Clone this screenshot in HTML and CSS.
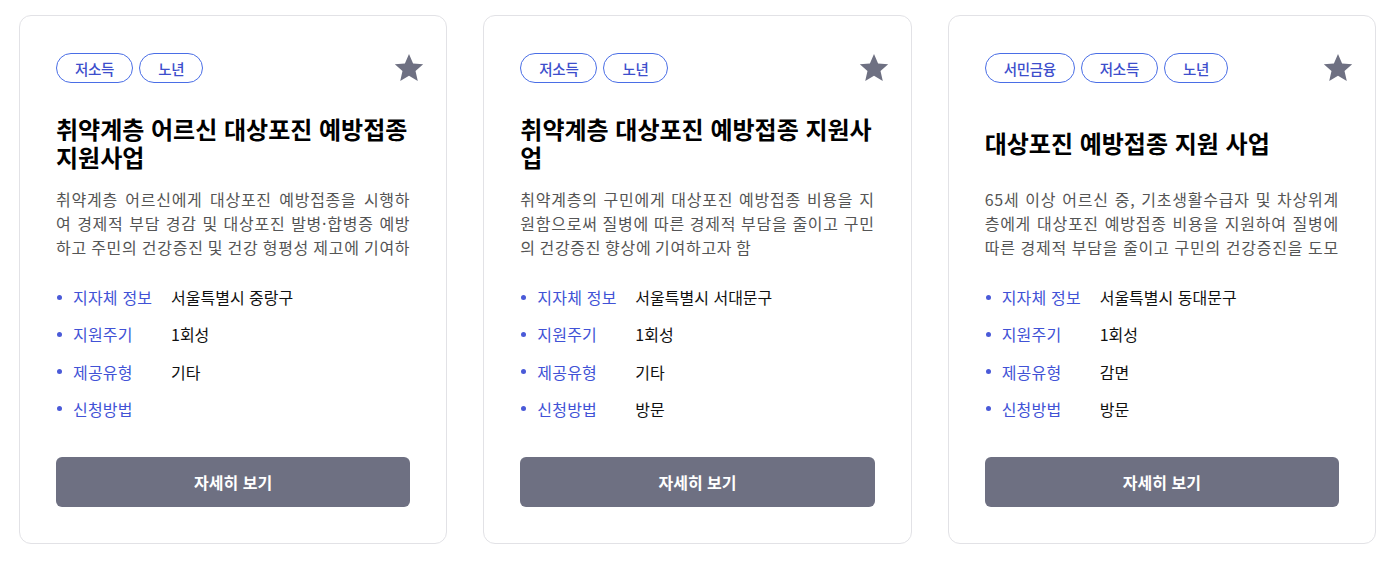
FILE: index.html
```html
<!DOCTYPE html>
<html lang="ko">
<head>
<meta charset="utf-8">
<link rel="stylesheet" href="styles.css">
</head>
<body>
<div class="cards">
  <div class="card">
    <div class="card-head">
      <div class="tags"><span class="tag">저소득</span><span class="tag">노년</span></div>
      <svg class="star" viewBox="0 0 24 24"><path d="M12 2.2l2.9 6.6 7.1.6-5.4 4.7 1.6 7-6.2-3.7-6.2 3.7 1.6-7L2 9.4l7.1-.6z"/></svg>
    </div>
    <div class="title-box"><h2 class="title">취약계층 어르신 대상포진 예방접종 지원사업</h2></div>
    <p class="desc">취약계층 어르신에게 대상포진 예방접종을 시행하여 경제적 부담 경감 및 대상포진 발병·합병증 예방하고 주민의 건강증진 및 건강 형평성 제고에 기여하고자 함</p>
    <ul class="info">
      <li><span class="label">지자체 정보</span><span class="value">서울특별시 중랑구</span></li>
      <li><span class="label">지원주기</span><span class="value">1회성</span></li>
      <li><span class="label">제공유형</span><span class="value">기타</span></li>
      <li><span class="label">신청방법</span><span class="value"></span></li>
    </ul>
    <button class="btn">자세히 보기</button>
  </div>
  <div class="card">
    <div class="card-head">
      <div class="tags"><span class="tag">저소득</span><span class="tag">노년</span></div>
      <svg class="star" viewBox="0 0 24 24"><path d="M12 2.2l2.9 6.6 7.1.6-5.4 4.7 1.6 7-6.2-3.7-6.2 3.7 1.6-7L2 9.4l7.1-.6z"/></svg>
    </div>
    <div class="title-box"><h2 class="title">취약계층 대상포진 예방접종 지원사업</h2></div>
    <p class="desc">취약계층의 구민에게 대상포진 예방접종 비용을 지원함으로써 질병에 따른 경제적 부담을 줄이고 구민의 건강증진 향상에 기여하고자 함</p>
    <ul class="info">
      <li><span class="label">지자체 정보</span><span class="value">서울특별시 서대문구</span></li>
      <li><span class="label">지원주기</span><span class="value">1회성</span></li>
      <li><span class="label">제공유형</span><span class="value">기타</span></li>
      <li><span class="label">신청방법</span><span class="value">방문</span></li>
    </ul>
    <button class="btn">자세히 보기</button>
  </div>
  <div class="card">
    <div class="card-head">
      <div class="tags"><span class="tag">서민금융</span><span class="tag">저소득</span><span class="tag">노년</span></div>
      <svg class="star" viewBox="0 0 24 24"><path d="M12 2.2l2.9 6.6 7.1.6-5.4 4.7 1.6 7-6.2-3.7-6.2 3.7 1.6-7L2 9.4l7.1-.6z"/></svg>
    </div>
    <div class="title-box"><h2 class="title">대상포진 예방접종 지원 사업</h2></div>
    <p class="desc">65세 이상 어르신 중, 기초생활수급자 및 차상위계층에게 대상포진 예방접종 비용을 지원하여 질병에 따른 경제적 부담을 줄이고 구민의 건강증진을 도모하고자 함</p>
    <ul class="info">
      <li><span class="label">지자체 정보</span><span class="value">서울특별시 동대문구</span></li>
      <li><span class="label">지원주기</span><span class="value">1회성</span></li>
      <li><span class="label">제공유형</span><span class="value">감면</span></li>
      <li><span class="label">신청방법</span><span class="value">방문</span></li>
    </ul>
    <button class="btn">자세히 보기</button>
  </div>
</div>
</body>
</html>
```
FILE: styles.css
```css
* { box-sizing: border-box; }
body {
  margin: 0;
  background: #fff;
  font-family: "Noto Sans CJK KR", "Noto Sans", sans-serif;
  color: #111;
}
.cards {
  display: flex;
  gap: 36px;
  padding: 15px 19px;
}
.card {
  flex: 1 1 0;
  min-width: 0;
  border: 1px solid #e2e2e6;
  border-radius: 12px;
  padding: 37px 36px 36px;
  display: flex;
  flex-direction: column;
}
.card-head {
  display: flex;
  justify-content: space-between;
  align-items: center;
  height: 30px;
}
.tags { display: flex; gap: 6px; }
.tag {
  height: 30px;
  padding: 0 18px;
  border: 1px solid #4a6ee6;
  border-radius: 15px;
  color: #3d4ecc;
  font-size: 14.5px;
  font-weight: 500;
  letter-spacing: -0.3px;
  display: flex;
  align-items: center;
}
.star {
  width: 34px;
  height: 34px;
  fill: #6e7082;
  margin-right: -16px;
}
.title-box {
  height: 60px;
  margin-top: 30px;
  display: flex;
  align-items: center;
}
.title {
  margin: 0;
  font-size: 24px;
  font-weight: 700;
  line-height: 28px;
  letter-spacing: 0;
  color: #000;
}
.desc {
  margin: 14px 0 0;
  font-size: 16px;
  line-height: 24px;
  letter-spacing: 0.75px;
  word-spacing: -1.6px;
  color: #555;
  text-align: justify;
  word-break: break-all;
  max-height: 72px;
  overflow: hidden;
}
.info {
  list-style: none;
  margin: 26px 0 0;
  padding: 0;
  display: flex;
  flex-direction: column;
  gap: 13.3px;
}
.info li {
  display: flex;
  align-items: center;
  font-size: 16px;
  line-height: 24px;
}
.info li::before {
  content: "";
  width: 5px;
  height: 5px;
  border-radius: 50%;
  background: #4a5ad8;
  margin: 0 11px 0 1px;
}
.label {
  width: 98px;
  color: #4152d6;
  letter-spacing: 0.2px;
}
.value { color: #111; }
.btn {
  margin-top: 36px;
  height: 50px;
  border: 0;
  border-radius: 6px;
  background: #6e7082;
  color: #fff;
  font-family: inherit;
  font-size: 16px;
  font-weight: 700;
}
```
